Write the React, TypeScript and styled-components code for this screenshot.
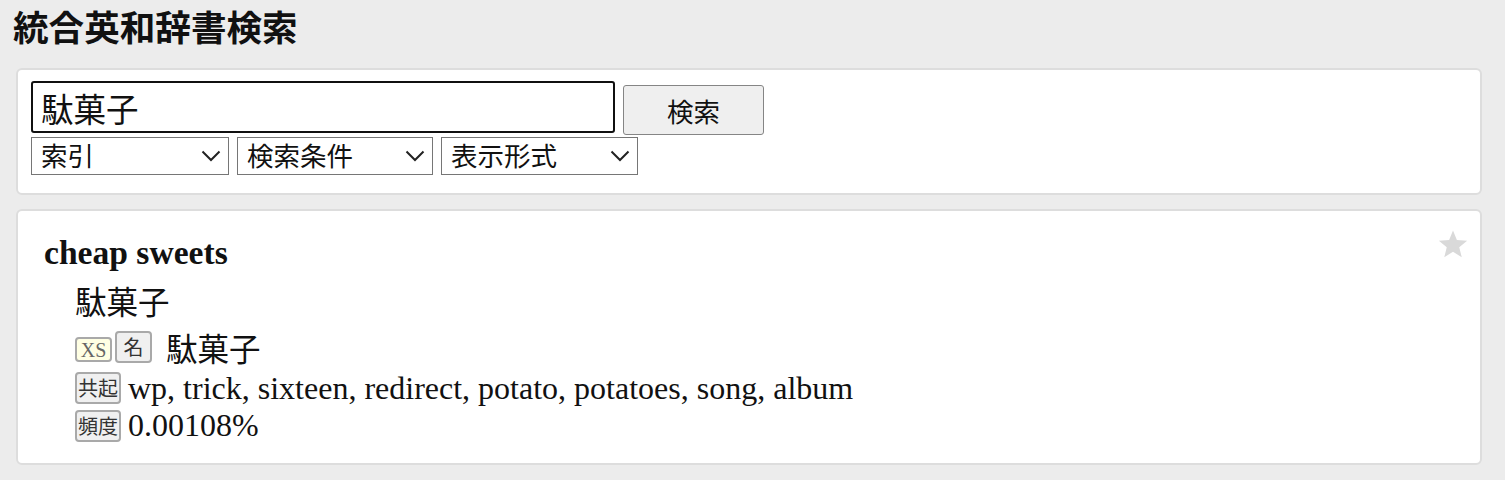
import React from "react";
import styled, { createGlobalStyle } from "styled-components";

const Global = createGlobalStyle`
  html, body { margin: 0; padding: 0; background: #ececec; }
  body {
    font-family: "Liberation Serif", "Noto Sans CJK JP", serif;
    color: #111;
  }
`;

const Page = styled.div`
  padding: 0 23px 16px 16px;
`;

const Title = styled.h1`
  margin: 0 0 0 -3px;
  padding: 4px 0 0;
  height: 68px;
  box-sizing: border-box;
  font-family: "Noto Sans CJK JP", sans-serif;
  font-weight: 700;
  font-size: 35.6px;
  line-height: 44px;
  color: #111;
`;

const Card = styled.section`
  position: relative;
  background: #fff;
  border: 2px solid #dddddd;
  border-radius: 6px;
  margin-bottom: 14px;
`;

const SearchCard = styled(Card)`
  padding: 11px 13px 18px;
`;

const SearchRow = styled.div`
  display: flex;
  align-items: flex-start;
  gap: 8px;
  height: 52px;
`;

const SearchInput = styled.input`
  box-sizing: border-box;
  width: 584px;
  height: 52px;
  border: 2px solid #101010;
  border-radius: 3px;
  padding: 0 8px;
  font-family: "Noto Sans CJK JP", sans-serif;
  font-size: 32.5px;
  color: #111;
  background: #fff;
  outline: none;
`;

const SearchButton = styled.button`
  box-sizing: border-box;
  margin-top: 4px;
  width: 141px;
  height: 50px;
  flex-shrink: 0;
  background: #efefef;
  border: 1px solid #858585;
  border-radius: 3px;
  font-family: "Noto Sans CJK JP", sans-serif;
  font-size: 26.5px;
  color: #111;
  padding: 0;
`;

const SelectRow = styled.div`
  display: flex;
  gap: 8px;
  margin-top: 4px;
`;

const SelectWrap = styled.div<{ $w: number }>`
  position: relative;
  width: ${(p) => p.$w}px;
  height: 38px;
`;

const Select = styled.select`
  box-sizing: border-box;
  appearance: none;
  width: 100%;
  height: 100%;
  border: 1px solid #767676;
  border-radius: 0;
  background: #fff;
  font-family: "Noto Sans CJK JP", sans-serif;
  font-size: 26.5px;
  line-height: 34px;
  color: #111;
  padding: 0 0 3px 9px;
  outline: none;
`;

const Chevron = styled.svg`
  position: absolute;
  right: 8px;
  top: 13px;
  pointer-events: none;
`;

const ResultCard = styled(Card)`
  padding: 18px 26px 19px;
`;

const Star = styled.svg`
  position: absolute;
  top: 18px;
  right: 12px;
`;

const Headword = styled.h2`
  margin: 0;
  font-size: 33.6px;
  font-weight: 700;
  line-height: 48px;
`;

const Body = styled.div`
  padding-left: 31px;
`;

const Translation = styled.div`
  font-family: "Noto Sans CJK JP", sans-serif;
  font-size: 31.5px;
  line-height: 47px;
`;

const Line = styled.div<{ $h: number }>`
  display: flex;
  align-items: center;
  height: ${(p) => p.$h}px;
  gap: 3px;
`;

const Badge = styled.span<{ $tone?: "level" }>`
  box-sizing: border-box;
  display: inline-flex;
  align-items: center;
  justify-content: center;
  border: 2px solid #a9a9a9;
  border-radius: 4px;
  background: ${(p) => (p.$tone === "level" ? "#ffffe3" : "#f0f0f0")};
  color: ${(p) => (p.$tone === "level" ? "#666" : "#333")};
  font-family: ${(p) =>
    p.$tone === "level" ? `"Liberation Serif", serif` : `"Noto Sans CJK JP", sans-serif`};
  font-size: 20px;
  height: ${(p) => (p.$tone === "level" ? "25px" : "32px")};
  margin-top: ${(p) => (p.$tone === "level" ? "6px" : "0")};
  padding: 0 1px;
  min-width: 37px;
  line-height: 1;
`;

const Word = styled.span`
  font-family: "Noto Sans CJK JP", sans-serif;
  font-size: 31.5px;
  margin-left: 11px;
`;

const SerifText = styled.span`
  font-size: 32px;
  margin-left: 4px;
`;

const ChevronIcon = () => (
  <Chevron width="20" height="12" viewBox="0 0 20 12">
    <path d="M1.5 1.5l8.5 8.5 8.5-8.5" fill="none" stroke="#222" strokeWidth="2" />
  </Chevron>
);

export default function App() {
  return (
    <>
      <Global />
      <Page>
        <Title>統合英和辞書検索</Title>
        <SearchCard>
          <SearchRow>
            <SearchInput defaultValue="駄菓子" autoFocus />
            <SearchButton>検索</SearchButton>
          </SearchRow>
          <SelectRow>
            <SelectWrap $w={198}>
              <Select>
                <option>索引</option>
              </Select>
              <ChevronIcon />
            </SelectWrap>
            <SelectWrap $w={196}>
              <Select>
                <option>検索条件</option>
              </Select>
              <ChevronIcon />
            </SelectWrap>
            <SelectWrap $w={197}>
              <Select>
                <option>表示形式</option>
              </Select>
              <ChevronIcon />
            </SelectWrap>
          </SelectRow>
        </SearchCard>
        <ResultCard>
          <Star width="30" height="30" viewBox="0 0 24 24">
            <path
              d="M12 1.2l3.1 7.6 8.2.5-6.3 5.3 2 8-7-4.4-7 4.4 2-8L.7 9.3l8.2-.5z"
              fill="#d9d9d9"
            />
          </Star>
          <Headword>cheap sweets</Headword>
          <Body>
            <Translation>駄菓子</Translation>
            <Line $h={45}>
              <Badge $tone="level">XS</Badge>
              <Badge>名</Badge>
              <Word>駄菓子</Word>
            </Line>
            <Line $h={38}>
              <Badge>共起</Badge>
              <SerifText>wp, trick, sixteen, redirect, potato, potatoes, song, album</SerifText>
            </Line>
            <Line $h={37}>
              <Badge>頻度</Badge>
              <SerifText>0.00108%</SerifText>
            </Line>
          </Body>
        </ResultCard>
      </Page>
    </>
  );
}
